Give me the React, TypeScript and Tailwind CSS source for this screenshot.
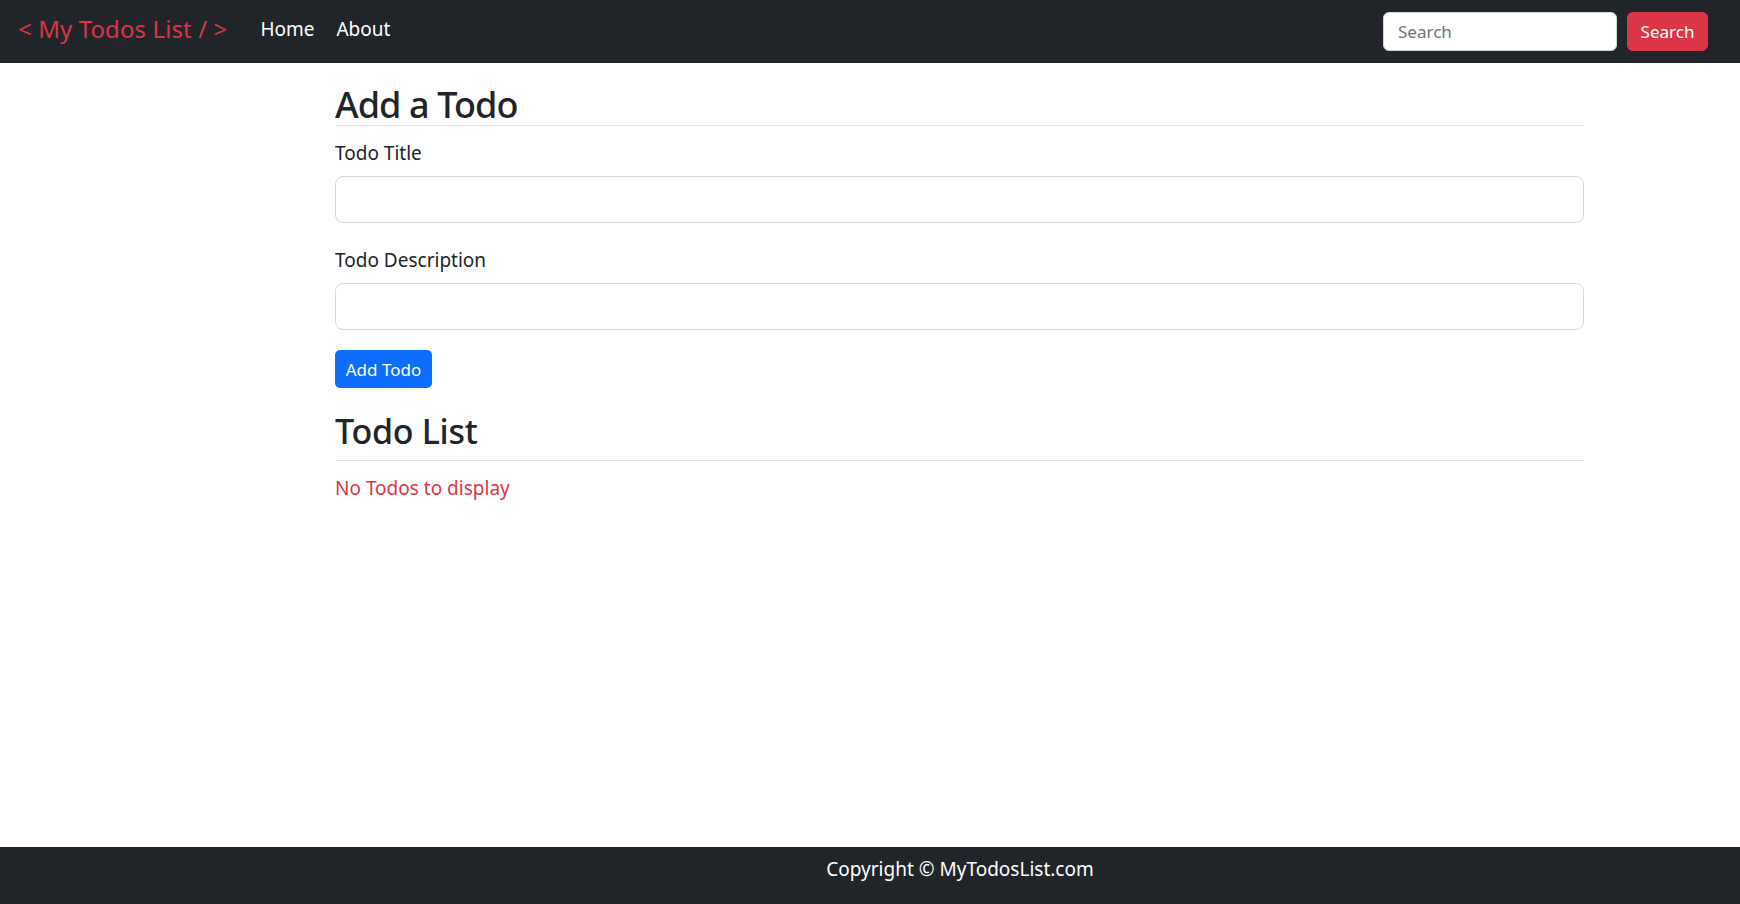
import { useState } from 'react';

interface Todo {
  sno: number;
  title: string;
  desc: string;
}

const font = 'font-["Noto_Sans","Liberation_Sans",sans-serif]';

export default function App() {
  const [todos, setTodos] = useState<Todo[]>([]);
  const [title, setTitle] = useState('');
  const [desc, setDesc] = useState('');

  const addTodo = (e: React.FormEvent) => {
    e.preventDefault();
    if (!title || !desc) return;
    setTodos([...todos, { sno: todos.length + 1, title, desc }]);
    setTitle('');
    setDesc('');
  };

  return (
    <div className={`${font} min-h-screen flex flex-col bg-white text-[#212529]`}>
      <nav className="h-[63px] bg-[#212529] flex items-center pl-[18px] pr-[32px]">
        <div className="flex items-center pb-[6px]">
          <a href="#" className="text-[24px] leading-[36px] tracking-[0.1px] text-[#dc3545]">
            &lt; My Todos List / &gt;
          </a>
          <ul className="flex items-center ml-[33px] gap-[22px] text-[19px] leading-[30px] text-white">
            <li>
              <a href="#">Home</a>
            </li>
            <li>
              <a href="#">About</a>
            </li>
          </ul>
        </div>
        <form className="ml-auto flex items-center gap-[10px]" onSubmit={(e) => e.preventDefault()}>
          <input
            type="search"
            placeholder="Search"
            className="w-[234px] h-[39px] rounded-[6px] bg-white px-[14px] text-[17px] text-[#212529] placeholder:text-[#6c757d] border border-[#ced4da] outline-none"
          />
          <button className="w-[81px] h-[39px] rounded-[6px] bg-[#dc3545] text-white text-[17px]">
            Search
          </button>
        </form>
      </nav>

      <main className="flex-1 ml-[335px] w-[1249px]">
        <h3 className="mt-[19px] pt-[2px] text-[36px] leading-[41px] tracking-[-0.9px] font-medium border-b border-[#dee2e6]">
          Add a Todo
        </h3>
        <form onSubmit={addTodo}>
          <label className="block mt-[12px] text-[19px] leading-[30px]">Todo Title</label>
          <input
            value={title}
            onChange={(e) => setTitle(e.target.value)}
            className="block w-full mt-[8px] h-[47px] rounded-[8px] border border-[#d5d8dc] px-[15px] text-[19px] outline-none"
          />
          <label className="block mt-[22px] text-[19px] leading-[30px]">Todo Description</label>
          <input
            value={desc}
            onChange={(e) => setDesc(e.target.value)}
            className="block w-full mt-[8px] h-[47px] rounded-[8px] border border-[#d5d8dc] px-[15px] text-[19px] outline-none"
          />
          <button
            type="submit"
            className="mt-[20px] w-[97px] h-[38px] rounded-[5px] bg-[#0d6efd] text-white text-[17px] pt-[1px]"
          >
            Add Todo
          </button>
        </form>

        <h3 className="mt-[20px] pt-[2px] text-[34px] leading-[42px] tracking-[-0.3px] font-medium pb-[8px] border-b border-[#dee2e6]">
          Todo List
        </h3>
        {todos.length === 0 ? (
          <p className="mt-[12px] text-[19px] leading-[30px] text-[#dc3545]">No Todos to display</p>
        ) : (
          todos.map((t) => (
            <div key={t.sno} className="mt-[10px]">
              <h4 className="text-[22px] font-medium">{t.title}</h4>
              <p className="text-[18px]">{t.desc}</p>
            </div>
          ))
        )}
      </main>

      <footer className="h-[57px] bg-[#212529] text-white pl-[180px] pt-[7px]">
        <p className="text-center text-[19px] leading-[30px]">Copyright © MyTodosList.com</p>
      </footer>
    </div>
  );
}
